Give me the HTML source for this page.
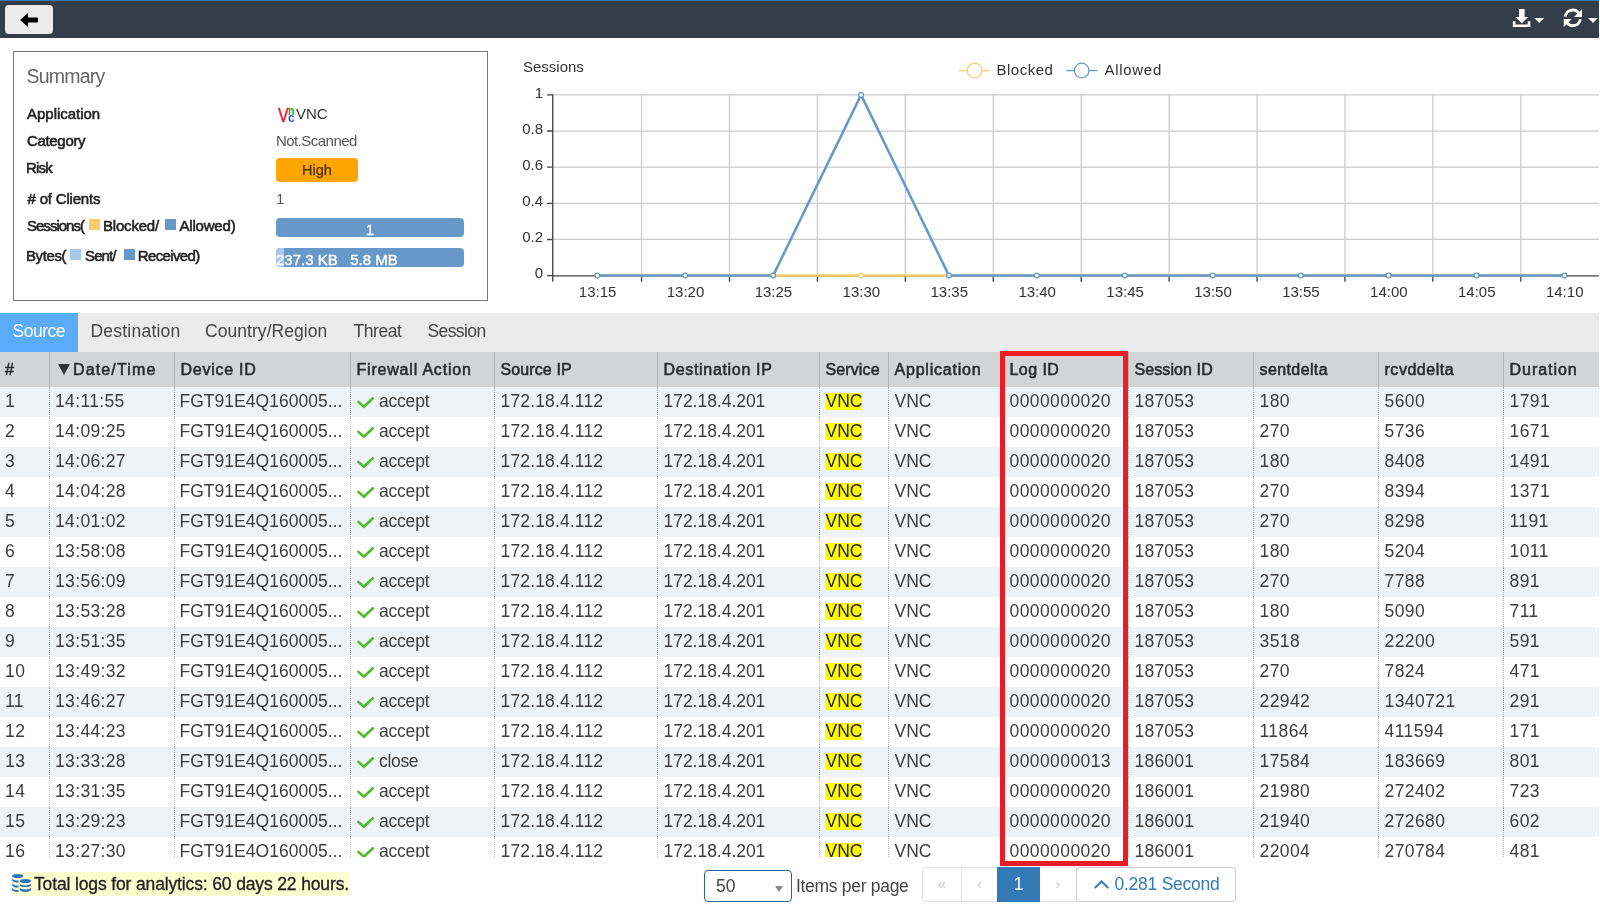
<!DOCTYPE html>
<html lang="en"><head><meta charset="utf-8"><title>Application Detail - VNC</title>
<style>
*{box-sizing:border-box}
html,body{margin:0;padding:0}
body{width:1600px;height:912px;overflow:hidden;position:relative;background:#fff;
 font-family:"Liberation Sans",sans-serif;font-size:17.5px;color:#333;}
#page{position:absolute;left:0;top:0;width:1599px;height:912px;overflow:hidden;background:#fff;will-change:transform}
/* top bar */
#topbar{position:absolute;left:0;top:0;width:1599px;height:38px;background:#343d48;border-top:1px solid #337ab7}
#back{position:absolute;left:5px;top:4px;width:48px;height:29px;background:#ebebeb;border-radius:4px}
#back svg{position:absolute;left:15px;top:8px;width:18px;height:14px}
.tico{position:absolute;top:-1px;left:0}
/* summary */
#summary{position:absolute;left:13px;top:51px;width:475px;height:250px;border:1px solid #777}
#summary h3{position:absolute;left:12.5px;top:12px;margin:0;font-size:19.5px;font-weight:400;color:#666;line-height:24px;letter-spacing:-.8px}
.sl{position:absolute;font-size:15px;font-weight:400;color:#222;-webkit-text-stroke:.55px #222;line-height:20px;white-space:nowrap}
.sv{position:absolute;left:263px;font-size:15px;color:#555;line-height:20px;white-space:nowrap}
.sq{position:absolute;width:11px;height:11px}
.bar{position:absolute;left:262px;width:188px;height:19px;border-radius:4px;background:#6699c9;color:#fff;font-size:15px;line-height:19px;overflow:hidden;white-space:pre}
#risk{position:absolute;left:262px;top:106px;width:82px;height:24px;border-radius:4px;background:#ffa500;color:#4f3200;font-size:14.5px;line-height:24px;text-align:center;-webkit-text-stroke:.25px #4f3200}
/* tabs */
#tabs{position:absolute;left:0;top:313px;width:1599px;height:39px;background:#ebebeb;font-size:17.5px;line-height:37px;color:#444;white-space:nowrap}
#tabs span{position:absolute;top:0;height:39px;padding:0 12.5px}
#tabs span.on{background:#5babfb;color:#fff}
/* grid */
#grid{position:absolute;left:0;top:352px;width:1599px;height:505px;overflow:hidden}
table{border-collapse:separate;border-spacing:0;table-layout:fixed;width:1599px}
th{height:35px;background:#d3d4d6;font-weight:400;-webkit-text-stroke:.55px #2b2b2b;font-size:16px;text-align:left;padding:0 0 0 5.5px;border-left:1px solid #b2b2b2;white-space:nowrap;overflow:hidden;color:#2b2b2b;line-height:35px;vertical-align:top}
td{height:30px;padding:0 0 0 5.5px;border-left:1px dotted #b4b4b4;white-space:nowrap;overflow:hidden;line-height:28px;vertical-align:top;color:#3d3d3d}
th:first-child,td:first-child{border-left:0;padding-left:5px}
td.n{letter-spacing:.42px}td.tm{letter-spacing:.354px}td.dev{letter-spacing:.03px;padding-left:4.5px}td.act{letter-spacing:-.208px}td.cl{letter-spacing:-.325px}td.ip1{letter-spacing:.15px}td.ip2{letter-spacing:-.03px}td.tm{padding-left:5px}td.sid{letter-spacing:.22px}
tr.o td{background:#eef3f7}
tr.e td{background:#fff}
.hl{display:inline-block;background:#ffff00;color:#222;padding:0 0 0 1px;margin-left:-1px;line-height:17px}
.chk{width:18px;height:13px;vertical-align:-1.5px;margin-right:4.5px}
.tri{display:inline-block;width:0;height:0;border-left:6px solid transparent;border-right:6px solid transparent;border-top:11.5px solid #333;margin:0 2.9px 0 2.6px;vertical-align:-0.4px}
#redbox{position:absolute;left:1000px;top:351px;width:128px;height:515px;border:5px solid #ed1c24}
/* footer */
#total{position:absolute;left:13px;top:872px;width:337px;height:24px;background:#fdfdd0;line-height:24px;color:#222;white-space:nowrap}
#total svg{position:absolute;left:-1px;top:2px;width:19px;height:18px}
#total span{position:absolute;left:21px;top:0;letter-spacing:-.14px;-webkit-text-stroke:.3px #222}
#sel{position:absolute;left:704px;top:870px;width:88px;height:32px;border:1px solid #2c6198;border-radius:4px;background:#fff;line-height:30px;padding-left:11px;color:#444}
#sel i{position:absolute;left:69.5px;top:14.5px;width:0;height:0;border-left:4.5px solid transparent;border-right:4.5px solid transparent;border-top:6px solid #858585}
#ipp{position:absolute;left:796px;top:870px;line-height:32px;color:#444;white-space:nowrap;letter-spacing:-.3px}
#pager{position:absolute;left:922px;top:867px;height:35px}
.pb{position:absolute;top:0;height:35px;border:1px solid #e2e2e2;background:#fff;color:#c8c8c8;text-align:center;line-height:31px;font-size:15px}
.pb.on{background:#337ab7;border-color:#337ab7;color:#fff;font-size:17.5px;line-height:32px}
#sec{position:absolute;left:1076px;top:867px;width:160px;height:35px;border:1px solid #ccc;border-radius:4px;background:#fff;color:#337ab7;line-height:33px;white-space:nowrap}
/* chart */
#chart{position:absolute;left:500px;top:40px;width:1099px;height:272px}
#chart text{font-family:"Liberation Sans",sans-serif;font-size:15px;fill:#333}
#vnci{position:absolute;left:264px;top:54px;width:18px;height:18px}
#vnci b{position:absolute;left:0;top:-1.5px;font-size:19.5px;line-height:20px;font-weight:400;color:#e8262d;transform:scaleX(.82);transform-origin:0 0;-webkit-text-stroke:.5px #e8262d}
#vnci i{position:absolute;left:9.5px;top:-2.3px;font-size:12.5px;line-height:14px;font-style:normal;font-weight:700;color:#2aa71f;transform:scaleX(.85);transform-origin:0 0}
#vnci u{position:absolute;left:9.5px;top:4.5px;font-size:12.5px;line-height:14px;text-decoration:none;font-weight:700;color:#2f55f5;transform:scaleX(.95);transform-origin:0 0}

</style></head>
<body>
<div id="page">
<div id="topbar">
 <div id="back"><svg viewBox="0 0 18 14"><path d="M0 7 L8 0 L8 4.6 L17 4.6 Q18 4.6 18 5.6 L18 8.4 Q18 9.4 17 9.4 L8 9.4 L8 14 Z" fill="#000"/></svg></div>
 <svg class="tico" width="1599" height="38" viewBox="0 0 1599 38">
  <g fill="#fff">
   <path d="M1519 8.900h5.600v8.100h3.700l-6.500 6.200l-6.500 -6.200h3.700z"/>
   <path d="M1512.800 21.200h2.700v3.400h12.200v-3.400h2.700v5.900h-17.600z"/>
   <path d="M1534.200 18h10l-5 5z"/>
   <path d="M1588 18h10l-5 5z"/>
  </g>
  <g transform="translate(0,-0.500)">
  <g fill="none" stroke="#fff" stroke-width="2.800">
   <path d="M1565.300 17.200A7.500 7.500 0 0 1 1578.600 13.400"/>
   <path d="M1580.300 19.600A7.500 7.500 0 0 1 1567 23.400"/>
  </g>
  <g fill="#fff">
   <path d="M1582 9.500v8h-8z"/>
   <path d="M1563.800 27.500v-8h8z"/>
  </g>
  </g>
 </svg>
</div>

<div id="summary">
<h3>Summary</h3>
<span class="sl" style="left:13px;top:52px;letter-spacing:-0.02px">Application</span>
<span class="sl" style="left:13px;top:79px;letter-spacing:-0.329px">Category</span>
<span class="sl" style="left:12px;top:106px;letter-spacing:-0.8px">Risk</span>
<span class="sl" style="left:13.6px;top:137px;letter-spacing:-0.198px"># of Clients</span>
<span class="sl" style="left:13px;top:164px;letter-spacing:-0.988px">Sessions(</span>
<span class="sl" style="left:89px;top:164px;letter-spacing:-0.2px">Blocked/</span>
<span class="sl" style="left:165.5px;top:164px;letter-spacing:-0.2px">Allowed)</span>
<span class="sl" style="left:12px;top:194px;letter-spacing:-0.38px">Bytes(</span>
<span class="sl" style="left:71px;top:194px;letter-spacing:-0.875px">Sent/</span>
<span class="sl" style="left:123.8px;top:194px;letter-spacing:-0.65px">Received)</span>
<i class="sq" style="left:74.75px;top:167px;background:#fccb6e"></i>
<i class="sq" style="left:151px;top:167px;background:#6699c9"></i>
<i class="sq" style="left:56px;top:197px;background:#a9c9e9"></i>
<i class="sq" style="left:110.25px;top:197px;background:#6699c9"></i>
<div id="vnci"><b>V</b><i>n</i><u>c</u></div>
<div class="sv" style="left:282px;top:52px;color:#333">VNC</div>
<div class="sv" style="left:262px;top:79px;letter-spacing:-.54px">Not.Scanned</div>
<div id="risk">High</div>
<div class="sv" style="left:262px;top:137px">1</div>
<div class="bar" style="top:166px;text-align:center;padding-top:2px;-webkit-text-stroke:.3px #fff">1</div>
<div class="bar" style="top:196px;padding-top:2px"><span style="position:absolute;left:0;top:0;width:8px;height:19px;background:#a9c9e9"></span><span style="position:relative;-webkit-text-stroke:.4px #fff;letter-spacing:0">237.3 KB   5.8 MB</span></div>
</div>

<svg id="chart" viewBox="500 40 1099 272">
<g stroke="#ccc" stroke-width="1.25" fill="none"><path d="M552.75 239.46H1600M552.75 203.32H1600M552.75 167.18H1600M552.75 131.04H1600M552.75 94.9H1600"/>
<path d="M641.57 94.9V275.6M729.49 94.9V275.6M817.41 94.9V275.6M905.33 94.9V275.6M993.25 94.9V275.6M1081.17 94.9V275.6M1169.09 94.9V275.6M1257.01 94.9V275.6M1344.93 94.9V275.6M1432.85 94.9V275.6M1520.77 94.9V275.6"/></g>
<g stroke="#444" stroke-width="1.35" fill="none"><path d="M552.75 94.3V276.5M552.75 275.85H1600"/>
<path d="M547 275.6H552.75M547 239.46H552.75M547 203.32H552.75M547 167.18H552.75M547 131.04H552.75M547 94.9H552.75"/>
<path d="M552.75 275.6V281.8M641.57 275.6V281.8M729.49 275.6V281.8M817.41 275.6V281.8M905.33 275.6V281.8M993.25 275.6V281.8M1081.17 275.6V281.8M1169.09 275.6V281.8M1257.01 275.6V281.8M1344.93 275.6V281.8M1432.85 275.6V281.8M1520.77 275.6V281.8"/></g>
<polyline points="597.3,275.6 1564.42,275.6" fill="none" stroke="#fccb6e" stroke-width="2.5"/>
<circle cx="861.06" cy="275.6" r="2.4" fill="#fff" stroke="#fccb6e" stroke-width="1.25"/>
<polyline points="597.3,275.6 685.22,275.6 773.14,275.6 861.06,94.9 948.98,275.6 1036.9,275.6 1124.82,275.6 1212.74,275.6 1300.66,275.6 1388.58,275.6 1476.5,275.6 1564.42,275.6" fill="none" stroke="#6699c9" stroke-width="2.5" stroke-linejoin="round"/>
<g fill="#fff" stroke="#6699c9" stroke-width="1.25"><circle cx="597.3" cy="275.6" r="2.4"/><circle cx="685.22" cy="275.6" r="2.4"/><circle cx="773.14" cy="275.6" r="2.4"/><circle cx="861.06" cy="94.9" r="2.4"/><circle cx="948.98" cy="275.6" r="2.4"/><circle cx="1036.9" cy="275.6" r="2.4"/><circle cx="1124.82" cy="275.6" r="2.4"/><circle cx="1212.74" cy="275.6" r="2.4"/><circle cx="1300.66" cy="275.6" r="2.4"/><circle cx="1388.58" cy="275.6" r="2.4"/><circle cx="1476.5" cy="275.6" r="2.4"/><circle cx="1564.42" cy="275.6" r="2.4"/></g>
<text x="523" y="72">Sessions</text>
<g text-anchor="end"><text x="543" y="278.3">0</text><text x="543" y="242.16">0.2</text><text x="543" y="206.02">0.4</text><text x="543" y="169.88">0.6</text><text x="543" y="133.74">0.8</text><text x="543" y="97.6">1</text></g>
<g text-anchor="middle"><text x="597.6" y="296.6">13:15</text><text x="685.52" y="296.6">13:20</text><text x="773.44" y="296.6">13:25</text><text x="861.36" y="296.6">13:30</text><text x="949.28" y="296.6">13:35</text><text x="1037.2" y="296.6">13:40</text><text x="1125.12" y="296.6">13:45</text><text x="1213.04" y="296.6">13:50</text><text x="1300.96" y="296.6">13:55</text><text x="1388.88" y="296.6">14:00</text><text x="1476.8" y="296.6">14:05</text><text x="1564.72" y="296.6">14:10</text></g>
<g fill="none" stroke-width="1.25"><path d="M959 70.5H967.2M981.8 70.5H990" stroke="#fccb6e"/><circle cx="974.5" cy="70.5" r="7.3" stroke="#fccb6e"/><path d="M1066.2 70.5H1074.4M1089 70.5H1097.4" stroke="#6699c9"/><circle cx="1081.7" cy="70.5" r="7.3" stroke="#6699c9"/></g>
<text x="996.5" y="74.8" style="letter-spacing:.5px">Blocked</text><text x="1104.5" y="74.8" style="letter-spacing:.7px">Allowed</text>
</svg>

<div id="tabs"><span class="on" style="left:0;width:78px;letter-spacing:-.5px">Source</span><span style="left:78px;letter-spacing:.22px">Destination</span><span style="left:192.5px;letter-spacing:.05px">Country/Region</span><span style="left:341px;letter-spacing:-.45px">Threat</span><span style="left:415px;letter-spacing:-.6px">Session</span></div>

<div id="grid"><table><col style="width:49px"><col style="width:125px"><col style="width:176px"><col style="width:144px"><col style="width:163px"><col style="width:162px"><col style="width:69px"><col style="width:115px"><col style="width:125px"><col style="width:125px"><col style="width:125px"><col style="width:125px"><col style="width:96px"><thead><tr><th style="letter-spacing:0.42px">#</th><th style="letter-spacing:1.148px"><span class="tri"></span>Date/Time</th><th style="letter-spacing:0.742px">Device ID</th><th style="letter-spacing:0.8px">Firewall Action</th><th style="letter-spacing:0.114px">Source IP</th><th style="letter-spacing:0.675px">Destination IP</th><th style="letter-spacing:0.112px">Service</th><th style="letter-spacing:0.794px">Application</th><th style="letter-spacing:0.445px">Log ID</th><th style="letter-spacing:0.094px">Session ID</th><th style="letter-spacing:0.397px">sentdelta</th><th style="letter-spacing:0.528px">rcvddelta</th><th style="letter-spacing:0.97px">Duration</th></tr></thead><tbody>
<tr class="o"><td class="n">1</td><td class="tm">14:11:55</td><td class="dev">FGT91E4Q160005...</td><td class="act"><svg class="chk" viewBox="0 0 18 13"><path d="M1.500 5.900L6.900 10.700L15.800 2.300" fill="none" stroke="#4dbb26" stroke-width="2.600" stroke-linecap="round"/></svg><span>accept</span></td><td class="ip1">172.18.4.112</td><td class="ip2">172.18.4.201</td><td class="v"><span class="hl">VNC</span></td><td class="v">VNC</td><td class="n">0000000020</td><td class="n sid">187053</td><td class="n">180</td><td class="n">5600</td><td class="n">1791</td></tr>
<tr class="e"><td class="n">2</td><td class="tm">14:09:25</td><td class="dev">FGT91E4Q160005...</td><td class="act"><svg class="chk" viewBox="0 0 18 13"><path d="M1.500 5.900L6.900 10.700L15.800 2.300" fill="none" stroke="#4dbb26" stroke-width="2.600" stroke-linecap="round"/></svg><span>accept</span></td><td class="ip1">172.18.4.112</td><td class="ip2">172.18.4.201</td><td class="v"><span class="hl">VNC</span></td><td class="v">VNC</td><td class="n">0000000020</td><td class="n sid">187053</td><td class="n">270</td><td class="n">5736</td><td class="n">1671</td></tr>
<tr class="o"><td class="n">3</td><td class="tm">14:06:27</td><td class="dev">FGT91E4Q160005...</td><td class="act"><svg class="chk" viewBox="0 0 18 13"><path d="M1.500 5.900L6.900 10.700L15.800 2.300" fill="none" stroke="#4dbb26" stroke-width="2.600" stroke-linecap="round"/></svg><span>accept</span></td><td class="ip1">172.18.4.112</td><td class="ip2">172.18.4.201</td><td class="v"><span class="hl">VNC</span></td><td class="v">VNC</td><td class="n">0000000020</td><td class="n sid">187053</td><td class="n">180</td><td class="n">8408</td><td class="n">1491</td></tr>
<tr class="e"><td class="n">4</td><td class="tm">14:04:28</td><td class="dev">FGT91E4Q160005...</td><td class="act"><svg class="chk" viewBox="0 0 18 13"><path d="M1.500 5.900L6.900 10.700L15.800 2.300" fill="none" stroke="#4dbb26" stroke-width="2.600" stroke-linecap="round"/></svg><span>accept</span></td><td class="ip1">172.18.4.112</td><td class="ip2">172.18.4.201</td><td class="v"><span class="hl">VNC</span></td><td class="v">VNC</td><td class="n">0000000020</td><td class="n sid">187053</td><td class="n">270</td><td class="n">8394</td><td class="n">1371</td></tr>
<tr class="o"><td class="n">5</td><td class="tm">14:01:02</td><td class="dev">FGT91E4Q160005...</td><td class="act"><svg class="chk" viewBox="0 0 18 13"><path d="M1.500 5.900L6.900 10.700L15.800 2.300" fill="none" stroke="#4dbb26" stroke-width="2.600" stroke-linecap="round"/></svg><span>accept</span></td><td class="ip1">172.18.4.112</td><td class="ip2">172.18.4.201</td><td class="v"><span class="hl">VNC</span></td><td class="v">VNC</td><td class="n">0000000020</td><td class="n sid">187053</td><td class="n">270</td><td class="n">8298</td><td class="n">1191</td></tr>
<tr class="e"><td class="n">6</td><td class="tm">13:58:08</td><td class="dev">FGT91E4Q160005...</td><td class="act"><svg class="chk" viewBox="0 0 18 13"><path d="M1.500 5.900L6.900 10.700L15.800 2.300" fill="none" stroke="#4dbb26" stroke-width="2.600" stroke-linecap="round"/></svg><span>accept</span></td><td class="ip1">172.18.4.112</td><td class="ip2">172.18.4.201</td><td class="v"><span class="hl">VNC</span></td><td class="v">VNC</td><td class="n">0000000020</td><td class="n sid">187053</td><td class="n">180</td><td class="n">5204</td><td class="n">1011</td></tr>
<tr class="o"><td class="n">7</td><td class="tm">13:56:09</td><td class="dev">FGT91E4Q160005...</td><td class="act"><svg class="chk" viewBox="0 0 18 13"><path d="M1.500 5.900L6.900 10.700L15.800 2.300" fill="none" stroke="#4dbb26" stroke-width="2.600" stroke-linecap="round"/></svg><span>accept</span></td><td class="ip1">172.18.4.112</td><td class="ip2">172.18.4.201</td><td class="v"><span class="hl">VNC</span></td><td class="v">VNC</td><td class="n">0000000020</td><td class="n sid">187053</td><td class="n">270</td><td class="n">7788</td><td class="n">891</td></tr>
<tr class="e"><td class="n">8</td><td class="tm">13:53:28</td><td class="dev">FGT91E4Q160005...</td><td class="act"><svg class="chk" viewBox="0 0 18 13"><path d="M1.500 5.900L6.900 10.700L15.800 2.300" fill="none" stroke="#4dbb26" stroke-width="2.600" stroke-linecap="round"/></svg><span>accept</span></td><td class="ip1">172.18.4.112</td><td class="ip2">172.18.4.201</td><td class="v"><span class="hl">VNC</span></td><td class="v">VNC</td><td class="n">0000000020</td><td class="n sid">187053</td><td class="n">180</td><td class="n">5090</td><td class="n">711</td></tr>
<tr class="o"><td class="n">9</td><td class="tm">13:51:35</td><td class="dev">FGT91E4Q160005...</td><td class="act"><svg class="chk" viewBox="0 0 18 13"><path d="M1.500 5.900L6.900 10.700L15.800 2.300" fill="none" stroke="#4dbb26" stroke-width="2.600" stroke-linecap="round"/></svg><span>accept</span></td><td class="ip1">172.18.4.112</td><td class="ip2">172.18.4.201</td><td class="v"><span class="hl">VNC</span></td><td class="v">VNC</td><td class="n">0000000020</td><td class="n sid">187053</td><td class="n">3518</td><td class="n">22200</td><td class="n">591</td></tr>
<tr class="e"><td class="n">10</td><td class="tm">13:49:32</td><td class="dev">FGT91E4Q160005...</td><td class="act"><svg class="chk" viewBox="0 0 18 13"><path d="M1.500 5.900L6.900 10.700L15.800 2.300" fill="none" stroke="#4dbb26" stroke-width="2.600" stroke-linecap="round"/></svg><span>accept</span></td><td class="ip1">172.18.4.112</td><td class="ip2">172.18.4.201</td><td class="v"><span class="hl">VNC</span></td><td class="v">VNC</td><td class="n">0000000020</td><td class="n sid">187053</td><td class="n">270</td><td class="n">7824</td><td class="n">471</td></tr>
<tr class="o"><td class="n">11</td><td class="tm">13:46:27</td><td class="dev">FGT91E4Q160005...</td><td class="act"><svg class="chk" viewBox="0 0 18 13"><path d="M1.500 5.900L6.900 10.700L15.800 2.300" fill="none" stroke="#4dbb26" stroke-width="2.600" stroke-linecap="round"/></svg><span>accept</span></td><td class="ip1">172.18.4.112</td><td class="ip2">172.18.4.201</td><td class="v"><span class="hl">VNC</span></td><td class="v">VNC</td><td class="n">0000000020</td><td class="n sid">187053</td><td class="n">22942</td><td class="n">1340721</td><td class="n">291</td></tr>
<tr class="e"><td class="n">12</td><td class="tm">13:44:23</td><td class="dev">FGT91E4Q160005...</td><td class="act"><svg class="chk" viewBox="0 0 18 13"><path d="M1.500 5.900L6.900 10.700L15.800 2.300" fill="none" stroke="#4dbb26" stroke-width="2.600" stroke-linecap="round"/></svg><span>accept</span></td><td class="ip1">172.18.4.112</td><td class="ip2">172.18.4.201</td><td class="v"><span class="hl">VNC</span></td><td class="v">VNC</td><td class="n">0000000020</td><td class="n sid">187053</td><td class="n">11864</td><td class="n">411594</td><td class="n">171</td></tr>
<tr class="o"><td class="n">13</td><td class="tm">13:33:28</td><td class="dev">FGT91E4Q160005...</td><td class="act cl"><svg class="chk" viewBox="0 0 18 13"><path d="M1.500 5.900L6.900 10.700L15.800 2.300" fill="none" stroke="#4dbb26" stroke-width="2.600" stroke-linecap="round"/></svg><span>close</span></td><td class="ip1">172.18.4.112</td><td class="ip2">172.18.4.201</td><td class="v"><span class="hl">VNC</span></td><td class="v">VNC</td><td class="n">0000000013</td><td class="n sid">186001</td><td class="n">17584</td><td class="n">183669</td><td class="n">801</td></tr>
<tr class="e"><td class="n">14</td><td class="tm">13:31:35</td><td class="dev">FGT91E4Q160005...</td><td class="act"><svg class="chk" viewBox="0 0 18 13"><path d="M1.500 5.900L6.900 10.700L15.800 2.300" fill="none" stroke="#4dbb26" stroke-width="2.600" stroke-linecap="round"/></svg><span>accept</span></td><td class="ip1">172.18.4.112</td><td class="ip2">172.18.4.201</td><td class="v"><span class="hl">VNC</span></td><td class="v">VNC</td><td class="n">0000000020</td><td class="n sid">186001</td><td class="n">21980</td><td class="n">272402</td><td class="n">723</td></tr>
<tr class="o"><td class="n">15</td><td class="tm">13:29:23</td><td class="dev">FGT91E4Q160005...</td><td class="act"><svg class="chk" viewBox="0 0 18 13"><path d="M1.500 5.900L6.900 10.700L15.800 2.300" fill="none" stroke="#4dbb26" stroke-width="2.600" stroke-linecap="round"/></svg><span>accept</span></td><td class="ip1">172.18.4.112</td><td class="ip2">172.18.4.201</td><td class="v"><span class="hl">VNC</span></td><td class="v">VNC</td><td class="n">0000000020</td><td class="n sid">186001</td><td class="n">21940</td><td class="n">272680</td><td class="n">602</td></tr>
<tr class="e"><td class="n">16</td><td class="tm">13:27:30</td><td class="dev">FGT91E4Q160005...</td><td class="act"><svg class="chk" viewBox="0 0 18 13"><path d="M1.500 5.900L6.900 10.700L15.800 2.300" fill="none" stroke="#4dbb26" stroke-width="2.600" stroke-linecap="round"/></svg><span>accept</span></td><td class="ip1">172.18.4.112</td><td class="ip2">172.18.4.201</td><td class="v"><span class="hl">VNC</span></td><td class="v">VNC</td><td class="n">0000000020</td><td class="n sid">186001</td><td class="n">22004</td><td class="n">270784</td><td class="n">481</td></tr>
</tbody></table></div>
<div id="redbox"></div>
<div id="total"><svg viewBox="0 0 19 18"><g fill="#2a72c0"><ellipse cx="5.700" cy="2" rx="5.700" ry="2"/><path d="M0 4.400c1 1.700 4 2.200 6.500 2.200v2.200c-2.500 0-5.500-.6-6.500-2.200z"/><path d="M0 9.400c1 1.700 4 2.200 6.500 2.200v2.200c-2.500 0-5.500-.6-6.500-2.200z"/><path d="M0 14c1 1.700 4 2.200 6.500 2.200v1.800c-2.500 0-5.500-.4-6.500-2z"/><ellipse cx="13.400" cy="7" rx="5.600" ry="2"/><path d="M7.800 9.800c1.500 2.200 9.700 2.200 11.200 0v1.800c-1.500 2-9.700 2-11.200 0z"/><path d="M7.800 13.800c1.500 2.200 9.700 2.200 11.200 0v2.200c-1.500 2.600-9.700 2.600-11.200 0z"/></g></svg><span>Total logs for analytics: 60 days 22 hours.</span></div>
<div id="sel">50<i></i></div>
<div id="ipp">Items per page</div>
<div id="pager">
 <div class="pb" style="left:0;width:40px;border-radius:4px 0 0 4px">&laquo;</div>
 <div class="pb" style="left:39px;width:37px">&lsaquo;</div>
 <div class="pb on" style="left:75px;width:43px">1</div>
 <div class="pb" style="left:118px;width:37px;border-left:0">&rsaquo;</div>
</div>
<div id="sec"><svg style="position:absolute;left:16.5px;top:11.5px" width="15" height="9" viewBox="0 0 15 9"><path d="M0.800 8 L7.500 1.300 L14.200 8" fill="none" stroke="#337ab7" stroke-width="2"/></svg><span style="position:absolute;left:37.500px;top:0;letter-spacing:-.25px">0.281 Second</span></div>
</div>

</body></html>
